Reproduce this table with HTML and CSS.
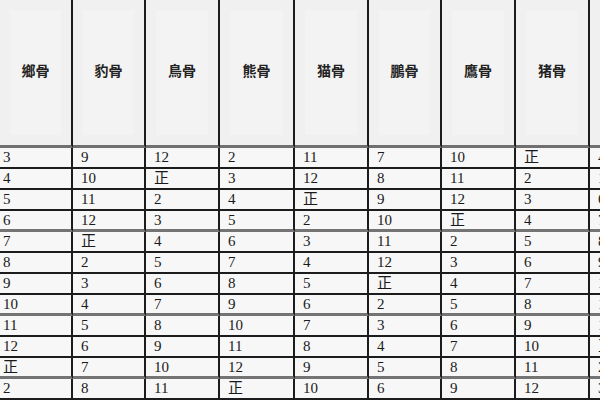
FILE: index.html
```html
<!DOCTYPE html>
<html lang="zh">
<head>
<meta charset="utf-8">
<title>月份表</title>
<link rel="stylesheet" href="styles.css">
</head>
<body>
<div class="sheet">
  <div class="cell head first">鄉骨</div>
  <div class="cell head">豹骨</div>
  <div class="cell head">鳥骨</div>
  <div class="cell head">熊骨</div>
  <div class="cell head">猫骨</div>
  <div class="cell head">鵬骨</div>
  <div class="cell head">鷹骨</div>
  <div class="cell head">猪骨</div>
  <div class="cell head"></div>

  <div class="cell first">3</div><div class="cell">9</div><div class="cell">12</div><div class="cell">2</div><div class="cell">11</div><div class="cell">7</div><div class="cell">10</div><div class="cell">正</div><div class="cell">4</div>
  <div class="cell first">4</div><div class="cell">10</div><div class="cell">正</div><div class="cell">3</div><div class="cell">12</div><div class="cell">8</div><div class="cell">11</div><div class="cell">2</div><div class="cell">1</div>
  <div class="cell first">5</div><div class="cell">11</div><div class="cell">2</div><div class="cell">4</div><div class="cell">正</div><div class="cell">9</div><div class="cell">12</div><div class="cell">3</div><div class="cell">6</div>
  <div class="cell first sep">6</div><div class="cell sep">12</div><div class="cell sep">3</div><div class="cell sep">5</div><div class="cell sep">2</div><div class="cell sep">10</div><div class="cell sep">正</div><div class="cell sep">4</div><div class="cell sep">7</div>
  <div class="cell first">7</div><div class="cell">正</div><div class="cell">4</div><div class="cell">6</div><div class="cell">3</div><div class="cell">11</div><div class="cell">2</div><div class="cell">5</div><div class="cell">8</div>
  <div class="cell first">8</div><div class="cell">2</div><div class="cell">5</div><div class="cell">7</div><div class="cell">4</div><div class="cell">12</div><div class="cell">3</div><div class="cell">6</div><div class="cell">9</div>
  <div class="cell first">9</div><div class="cell">3</div><div class="cell">6</div><div class="cell">8</div><div class="cell">5</div><div class="cell">正</div><div class="cell">4</div><div class="cell">7</div><div class="cell">10</div>
  <div class="cell first sep">10</div><div class="cell sep">4</div><div class="cell sep">7</div><div class="cell sep">9</div><div class="cell sep">6</div><div class="cell sep">2</div><div class="cell sep">5</div><div class="cell sep">8</div><div class="cell sep">11</div>
  <div class="cell first">11</div><div class="cell">5</div><div class="cell">8</div><div class="cell">10</div><div class="cell">7</div><div class="cell">3</div><div class="cell">6</div><div class="cell">9</div><div class="cell">12</div>
  <div class="cell first">12</div><div class="cell">6</div><div class="cell">9</div><div class="cell">11</div><div class="cell">8</div><div class="cell">4</div><div class="cell">7</div><div class="cell">10</div><div class="cell">正</div>
  <div class="cell first sep">正</div><div class="cell sep">7</div><div class="cell sep">10</div><div class="cell sep">12</div><div class="cell sep">9</div><div class="cell sep">5</div><div class="cell sep">8</div><div class="cell sep">11</div><div class="cell sep">2</div>
  <div class="cell first">2</div><div class="cell">8</div><div class="cell">11</div><div class="cell">正</div><div class="cell">10</div><div class="cell">6</div><div class="cell">9</div><div class="cell">12</div><div class="cell">3</div>
</div>
</body>
</html>
```

FILE: styles.css
```css
html, body {
  margin: 0;
  padding: 0;
  width: 600px;
  height: 400px;
  overflow: hidden;
  background: #f6f6f6;
}

.sheet {
  display: grid;
  grid-template-columns: 73px 73px 74px 75px 74px 73px 74px 74px 40px;
  grid-template-rows: 148px repeat(12, 21px);
  font-family: "Liberation Serif", "Noto Sans CJK SC", serif;
  color: #1a1a1a;
}

.cell {
  box-sizing: border-box;
  border-right: 2px solid #1c1c1c;
  border-bottom: 2px solid #1c1c1c;
  background: #f7f7f7;
  font-size: 15px;
  line-height: 19px;
  padding-left: 8px;
  white-space: nowrap;
  overflow: hidden;
}

.cell.first {
  padding-left: 3px;
}

.cell.sep {
  border-bottom: 3px solid #747474;
  line-height: 18px;
}

.cell.head {
  display: flex;
  align-items: center;
  justify-content: center;
  padding: 0;
  padding-bottom: 4px;
  background: #f3f3f3;
  border-bottom: 3px solid #707070;
  font-family: "Noto Sans CJK SC", sans-serif;
  font-weight: 700;
  font-size: 14px;
  color: #222;
  box-shadow: inset 0 0 0 10px #f0f0f0;
}

.cell.head.first {
  padding-left: 0;
}
```
